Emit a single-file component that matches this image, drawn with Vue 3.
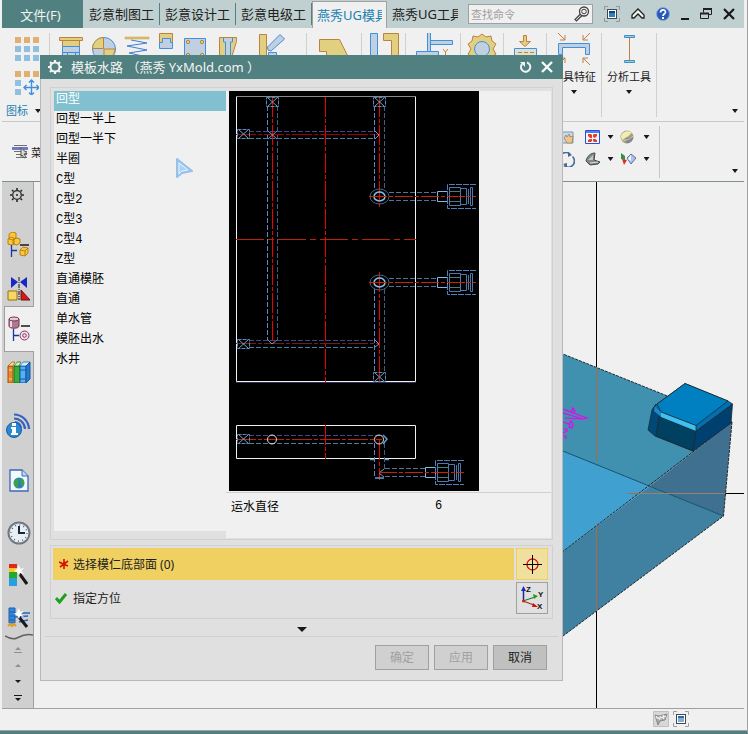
<script setup>
import { ref } from 'vue'

const tabs = ['彭意制图工', '彭意设计工', '彭意电级工', '燕秀UG模具', '燕秀UG工具']
const activeTab = ref(3)
const layouts = ['回型', '回型一半上', '回型一半下', '半圈', 'C型', 'C型2', 'C型3', 'C型4', 'Z型', '直通模胚', '直通', '单水管', '模胚出水', '水井']
const selected = ref(0)
const diameter = ref('6')
const plugs = [
  [266, 97], [373, 97], [237, 129], [237, 339], [373, 372], [237, 434]
]
</script>

<template>
  <div class="shell">
    <header class="topbar">
      <button class="file">文件(F)</button>
      <nav class="tabs">
        <button v-for="(t, i) in tabs" :key="t" class="tab" :class="{ on: i === activeTab }" @click="activeTab = i"><span>{{ t }}</span></button>
      </nav>
      <div class="search">
        <input type="text" placeholder="查找命令" aria-label="查找命令" />
        <svg width="16" height="16" viewBox="0 0 16 16" fill="none" stroke="#404040"><circle cx="10" cy="5.500" r="4.500" stroke-width="1.300" /><circle cx="10" cy="5.500" r="2.300" /><path d="M6.500 8 1 13.500l1.500 1.500L8 9.500" stroke-width="1.200" /></svg>
      </div>
      <div class="wincontrols">
        <button aria-label="全屏"><svg width="16" height="16" viewBox="0 0 16 16"><path d="M.5 4V.5H4M12 .5h3.500V4M.5 12v3.500H4M12 15.500h3.500V12" fill="none" stroke="#909898" /><rect x="3.500" y="3.500" width="9" height="9" fill="#fff" stroke="#404850" /><path d="M5 5h6v6H5z" fill="#3080c0" /><path d="M5 5h6v2H5z" fill="#104080" /></svg></button>
        <button aria-label="折叠"><svg width="14" height="12" viewBox="0 0 14 12"><path d="M1 7 7 1l6 6v3h-2L7 6l-4 4H1z" fill="#f4f4f4" stroke="#202020" stroke-width="1.300" /></svg></button>
        <button aria-label="帮助"><svg width="14" height="14" viewBox="0 0 14 14"><circle cx="7" cy="7" r="6.500" fill="#2858b8" stroke="#88a8d8" /><path d="M4.500 5.500C4.500 2 9.500 2 9.500 5c0 2-2.500 2-2.500 4" fill="none" stroke="#fff" stroke-width="1.700" /><path d="M6 10h2v2H6z" fill="#fff" /></svg></button>
        <button aria-label="最小化"><svg width="8" height="12" viewBox="0 0 8 12"><path d="M0 10h8v2H0z" fill="#181818" /></svg></button>
        <button aria-label="还原"><svg width="12" height="12" viewBox="0 0 12 12" fill="none" stroke="#202020"><path d="M3.500 4.500v-4h8v6h-3" /><path d="M3 1h9M0 5.500h9" stroke-width="2" /><path d="M.5 5.500h8v5h-8z" /></svg></button>
        <button aria-label="关闭"><svg width="12" height="12" viewBox="0 0 12 12"><path d="m1 1 10 10M11 1 1 11" stroke="#181818" stroke-width="2.200" /></svg></button>
      </div>
    </header>

    <section class="ribbon">
      <div class="group first">
        <svg width="24" height="24" viewBox="0 0 24 24"><path d="M0 0h6v6H0zM9 0h6v6H9zM18 0h6v6h-6z" fill="#e0b070" /><path d="M0 9h6v6H0zM9 9h6v6H9zM18 9h6v6h-6zM0 18h6v6H0zM9 18h6v6H9zM18 18h6v6h-6z" fill="#90c0e0" /></svg>
        <svg width="24" height="24" viewBox="0 0 24 24"><path d="M0 0h6v6H0zM9 0h6v6H9zM18 0h6v6h-6z" fill="#e0b070" /><path d="M0 9h6v6H0zM0 18h6v6H0z" fill="#90c0e0" /><path d="M9 16.500h15M16.500 9v15M11.500 14 9 16.500l2.500 2.500M21.500 14l2.500 2.500-2.500 2.500M14 11.500 16.500 9l2.500 2.500M14 21.500l2.500 2.500 2.500-2.500" fill="none" stroke="#4090e0" stroke-width="1.400" /></svg>
        <button class="glabel blue">图标<i class="caret"></i></button>
      </div>
      <div class="group tools">
        <svg width="33" height="40" viewBox="58 33 33 40"><path d="M65.500 40v16h17V40z" fill="#e0d080" stroke="#c08040" /><path d="M65.500 46.500h17v12h-17z" fill="#c0d0e0" stroke="#4090e0" /><path d="M66 52.500h16M70.500 53v6M78.500 53v6" stroke="#4090e0" /><path d="M62.500 37.500h23v3h-23z" fill="#e0d080" stroke="#c08040" /></svg>
        <svg width="33" height="40" viewBox="91 33 33 40"><circle cx="107" cy="49" r="11.500" fill="#c0d0e0" stroke="#4090e0" /><path d="M106.500 48.500h-11a11 11 0 0 1 11-11zM107 49h11a11 11 0 0 1-11 11z" fill="#e0d080" stroke="#c08040" /></svg>
        <svg width="33" height="40" viewBox="124 33 33 40"><path d="M128 37h24v2h-24z" fill="#e0c060" stroke="#c0a050" stroke-width=".5" /><path d="m134 40 16 3-20 3 20 4-18 3 18 4" fill="none" stroke="#4080d0" /></svg>
        <svg width="25" height="40" viewBox="157 33 25 40"><path d="M162.500 33.500h13v11h-13z" fill="#e0d080" stroke="#c08040" /><path d="M165.500 38.500h8v4h2v6h-13v-6h3z" fill="#c0d0e0" stroke="#4090e0" /></svg>
        <svg width="33" height="40" viewBox="182 33 33 40"><path d="M187.500 38.500h21v20h-21z" fill="#c0d0e0" stroke="#4090e0" /><g fill="#e0d080" stroke="#c08040"><circle cx="191" cy="42" r="1.700" /><circle cx="205" cy="42" r="1.700" /><circle cx="191" cy="55" r="1.700" /><circle cx="205" cy="55" r="1.700" /></g></svg>
        <svg width="33" height="40" viewBox="215 33 33 40"><path d="M222.500 37.500h17v4l-5 16h-12z" fill="#e0d080" stroke="#c08040" /><path d="M226.500 38v4h2v14h5V42h2v-4" fill="#c0d0e0" stroke="#4090e0" /></svg>
        <svg width="56" height="40" viewBox="248 33 56 40"><path d="M262.500 34.500h7v22h-7z" fill="#e0d080" stroke="#c08040" /><path d="m283 34.500 4.500 4.500L274 51l-3-1-.5-3zM271.500 52.500h8v6h-8z" fill="#c0d0e0" stroke="#4090e0" /></svg>
      </div>
      <div class="group g54"><svg width="40" height="40" viewBox="314 33 40 40"><path d="M319.500 39.500h20l9 18h-22v-6h-7z" fill="#e0d080" stroke="#c08040" /></svg></div>
      <div class="group g44"><svg width="40" height="40" viewBox="364 33 40 40"><path d="M370.500 33.500h7v24h-7z" fill="#c0d0e0" stroke="#4090e0" /><path d="M383.500 33.500h15v24h-7v-17h-8z" fill="#e0d080" stroke="#c08040" /></svg></div>
      <div class="group g54"><svg width="40" height="40" viewBox="413 33 40 40"><path d="M427.500 30.500h3v21h-3zM430.500 40.500h22v4h-22zM416.500 51.500h22v6h-22z" fill="#c0d0e0" stroke="#4090e0" /><path d="m443 49 2.500 3 2.500-3m-2.500 3v3" fill="none" stroke="#c08040" /></svg></div>
      <div class="group g43"><svg width="40" height="40" viewBox="462 33 40 40"><path d="m482 34 4 3 5-1 1 5 4 3-3 5 3 5-4 3-1 5-5-1-4 3-4-3-5 1-1-5-4-3 3-5-3-5 4-3 1-5 5 1z" fill="#e0d080" stroke="#c08040" /><circle cx="482" cy="49" r="7.500" fill="#c0d0e0" stroke="#4090e0" /></svg></div>
      <div class="group g43"><svg width="40" height="40" viewBox="504 33 40 40"><path d="M522.500 35.500h3v6h4l-5.500 5-5.500-5h4z" fill="#e0d080" stroke="#c08040" /><path d="M513.500 48.500h22v10h-22z" fill="#e0e0d0" stroke="#4090e0" /><path d="M517 52.500h16" stroke="#c08040" stroke-dasharray="4 2" /></svg></div>
      <div class="group g54 stack">
        <svg width="40" height="40" viewBox="554 33 40 40"><path d="M558.500 43.500h31v11h-4v-7h-23v7h-4z" fill="#c0d0e0" stroke="#4090e0" /><path d="m558 33 7 7m0-5v5h-5M590 33l-7 7m0-5v5h5M590 65l-7-7m5 0h-5v5M558 65l7-7m-5 0h5v5" fill="none" stroke="#c08040" /></svg>
        <button class="glabel">模具特征</button><i class="caret"></i>
      </div>
      <div class="group g54 stack">
        <svg width="40" height="40" viewBox="608 33 40 40"><path d="M628.500 37v24" stroke="#c08040" /><path d="M623.500 35.500h10v2h-10zM623.500 60.500h10v2h-10z" fill="#a0c8e0" stroke="#4090c0" /></svg>
        <button class="glabel">分析工具</button><i class="caret"></i>
      </div>
      <i class="caret corner"></i>
    </section>

    <section class="toolbar">
      <button class="menu">
        <svg width="18" height="15" viewBox="0 0 18 15"><path d="M2 1.500h13M2 7.500h13M4 10.500h11M4 13.500h11" stroke="#707070" /><path d="M0 3h16v3H0z" fill="#7078c8" /><path d="m9 3.500 6 6-3 .5 2 3-2 1-2-3-1 1.500z" fill="#d8d8d8" stroke="#505050" /></svg>
        菜
      </button>
      <div class="views">
        <svg width="16" height="15" viewBox="0 0 16 15"><path d="M1 2h13v11H1z" fill="#c8d8f0" stroke="#8098b0" /><path d="m5 8 2-3 1 2 2-3 1 3 3-1-1 7H8z" fill="#e8c890" stroke="#987850" stroke-width=".7" /></svg>
        <svg width="15" height="14" viewBox="0 0 15 14"><path d="M.5.5h14v13H.5z" fill="#f0f4ff" stroke="#2850d0" /><path d="M1 1h13v2H1z" fill="#5080e8" /><path d="M3 4h3l1 1v3H5L3 6zM12 4H9L8 5v2l2 1 2-2zM3 12h3l1-1V9H5l-2 1zM12 12H9l-1-1V9h2l2 1z" fill="#e04028" /></svg>
        <i class="caret"></i>
        <svg width="14" height="14" viewBox="0 0 14 14"><circle cx="7" cy="7" r="6.500" fill="#a8a070" /><path d="M1 7C1 2 8-1 12 3c-3 1-2 3-5 4S3 10 2 10z" fill="#f0ecb8" /><path d="M6 8c3 0 5-1 7-2 1 4-3 8-7 7z" fill="#8088a0" /><path d="M2 10c4 1 8-1 11-4" fill="none" stroke="#d8d0a0" /></svg>
        <i class="caret"></i>
        <svg width="16" height="15" viewBox="0 0 16 15"><path d="M3 11a6 6 0 0 1 8-9M13.500 4.500a6 6 0 0 1-8.500 9" fill="none" stroke="#486898" stroke-width="1.600" /><path d="M9 0v5l4-2zM8 15v-4l-4 1z" fill="#486898" /></svg>
        <svg width="16" height="14" viewBox="0 0 16 14"><path d="M1 9C2 4 6 1 10 1L9 8l6 2-2 2-8 1z" fill="#808888" stroke="#404848" /><path d="m3 8 5-5v5z" fill="#c0c8c8" /><path d="m5 11 8-1" stroke="#e0e0e0" /></svg>
        <i class="caret"></i>
        <svg width="16" height="14" viewBox="0 0 16 14"><path d="m1 1 4 3v4L1 7z" fill="#30904a" /><path d="m2 7 5 1-3 5z" fill="#d83020" /><path d="m11 2 5 4-5 6-4-6z" fill="#b0c0e8" stroke="#6070a8" /><path d="m11 3-3 4 3 2z" fill="#fff" /></svg>
        <i class="caret"></i>
      </div>
      <i class="caret corner"></i>
    </section>

    <main class="main">
      <aside class="rail">
        <button class="s1" aria-label="设置"><svg width="14" height="14" viewBox="0 0 14 14"><circle cx="7" cy="7" r="4.300" fill="none" stroke="#282828" stroke-width="1.300" /><circle cx="7" cy="7" r="1" fill="#282828" /><path d="M7 0v2M7 12v2M0 7h2M12 7h2M2 2l1.500 1.500M12 2l-1.500 1.500M2 12l1.500-1.500M12 12l-1.500-1.500" stroke="#282828" stroke-width="1.600" /></svg></button>
        <button class="s2" aria-label="装配导航器"><svg width="24" height="26" viewBox="0 0 24 26"><g fill="#f8c840" stroke="#b87808" stroke-width=".9"><path d="m2 2 3-2 4 1v5l-3 2-4-1zM1 7l3-2 3 1v6l-3 1-3-1zM6 8l3-2 4 1v4l-3 2-4-1z" /><path d="m13 18 3-3 5 1v5l-3 3-5-1z" /><path d="m13 18 5 1 3-3M18 19v5" fill="none" /></g><path d="M13 13h9" stroke="#181818" stroke-width="1.500" /><path d="M4.500 13v12M5 18.500h5" stroke="#1838a0" stroke-width="1.300" /></svg></button>
        <button class="s3" aria-label="约束导航器"><svg width="24" height="24" viewBox="0 0 24 24"><path d="m4 0 7 5-7 6zM20 0l-7 5 7 6z" fill="#1828c8" /><path d="M12 0v23" stroke="#181818" stroke-dasharray="4 1 1 1" /><path d="M1 14h9v9H1z" fill="#f8d860" stroke="#907010" /><path d="M14 13v10h9z" fill="#d81818" stroke="#701010" /></svg></button>
        <button class="s4" aria-label="部件导航器"><svg width="24" height="26" viewBox="0 0 24 26"><path d="M1 3v7c0 3 10 3 10 0V3z" fill="#b07890" stroke="#703850" /><ellipse cx="6" cy="3" rx="5" ry="2" fill="#e8c8d8" stroke="#703850" /><path d="M3 5v6" stroke="#f0d8e0" stroke-width="2" /><path d="M13 10h9" stroke="#181818" stroke-width="1.500" /><path d="M5.500 13v12M6 19.500h5" stroke="#1838a0" stroke-width="1.300" /><circle cx="16.500" cy="19.500" r="4.500" fill="#f0e0e8" stroke="#803860" /><circle cx="16.500" cy="19.500" r="1.800" fill="none" stroke="#803860" /></svg></button>
        <button class="s5" aria-label="重用库"><svg width="24" height="22" viewBox="0 0 24 22"><path d="m1 5 4-4h18v17l-4 4H1z" fill="#f8f0d8" /><path d="M1 5h5v17H1z" fill="#e88828" stroke="#a85008" /><path d="m1 5 4-4h3L6 5z" fill="#f8d8a0" stroke="#a85008" stroke-width=".7" /><path d="M7 5h6v17H7z" fill="#38b038" stroke="#107018" /><path d="m7 5 3-4h4l-2 4z" fill="#d0f0c0" stroke="#107018" stroke-width=".7" /><path d="M13 5h6v17h-6z" fill="#58b0f0" stroke="#1058a8" /><path d="m13 5 3-4h7l-4 4z" fill="#d8ecfc" stroke="#1058a8" stroke-width=".7" /><path d="m19 5 4-4v17l-4 4z" fill="#2878c8" stroke="#1058a8" /><path d="M13 9h6M13 18h6" stroke="#1058a8" /><path d="M2 9h3M2 18h3" stroke="#f8d8a0" /></svg></button>
        <button class="s6" aria-label="信息"><svg width="25" height="25" viewBox="0 0 25 25"><g fill="none" stroke="#3860c0" stroke-width="2.200"><path d="M8 1.500A15 15 0 0 1 23 16" /><path d="M8 5.500A11 11 0 0 1 19 16" /><path d="M9 9A7 7 0 0 1 15 15" /></g><circle cx="8" cy="17" r="7.500" fill="#2888d0" stroke="#1860a0" /><path d="M6 10h4v3H6zM5 14h5v6h2v2H5v-2h1v-4H5z" fill="#fff" /></svg></button>
        <button class="s7" aria-label="浏览器"><svg width="20" height="23" viewBox="0 0 20 23"><path d="M1 1h12l6 6v15H1z" fill="#f4f8ff" stroke="#3868b8" stroke-width="1.300" /><path d="M13 1v6h6" fill="#c8d8f0" stroke="#3868b8" /><circle cx="10" cy="14" r="5.500" fill="#3080c0" /><path d="M6 11c3-3 4 0 3 3s2 3-1 5c-3-2-4-5-2-8zM12 9c4 1 4 7 1 8 0-3-2-3-1-8z" fill="#38a838" /></svg></button>
        <button class="s8" aria-label="历史记录"><svg width="24" height="24" viewBox="0 0 24 24"><circle cx="12" cy="12" r="10.500" fill="#e8eef4" stroke="#707880" stroke-width="2" /><circle cx="12" cy="12" r="8" fill="none" stroke="#506880" stroke-dasharray="1 3.190" stroke-width="1.500" /><path d="M12 5v7h6" fill="none" stroke="#182838" stroke-width="2" /></svg></button>
        <button class="s9" aria-label="系统材料"><svg width="22" height="24" viewBox="0 0 22 24"><path d="M1 1h8v4H1z" fill="#e02818" /><path d="M1 5h8v4H1z" fill="#f8c828" /><path d="M1 9h8v6H1z" fill="#28a828" /><path d="M1 15h8v8H1z" fill="#28a0e0" /><path d="m11 10 8 11" stroke="#181818" stroke-width="3" /><path d="m11 2 1 4 4-1-3 3 3 3-4-1-1 3-2-4-3-1 3-2z" fill="#fff" /></svg></button>
        <button class="s10" aria-label="加工向导"><svg width="24" height="24" viewBox="0 0 24 24"><path d="M2 2h6v15H2z" fill="#3888d8" stroke="#1860b0" /><path d="M3 6h4M3 10h4M3 14h4M8 7h15M8 11l13-1M12 16l9-2" stroke="#2068c0" stroke-width="1.500" /><path d="m1 20 2-2 2 2 2-2 2 2" fill="none" stroke="#e0a020" stroke-width="2" /><path d="m12 11 8 10" stroke="#181818" stroke-width="3" /><path d="m12 2 1 4 4-1-3 3 3 3-4-1-1 3-2-4-3-1 3-2z" fill="#fff" /></svg></button>
        <svg class="wave" width="28" height="8" viewBox="0 0 28 8"><path d="M0 3c5 3 8 4 12 2s8-5 16-3" fill="none" stroke="#606060" stroke-width="1.500" /></svg>
        <div class="scrollers">
          <svg width="8" height="6" viewBox="0 0 8 6"><path d="m4 0 3 3H1zM0 5h8v1H0z" fill="#909090" /></svg>
          <svg width="8" height="6" viewBox="0 0 8 6"><path d="m4 1 3 3H1z" fill="#909090" /></svg>
          <svg width="8" height="6" viewBox="0 0 8 6"><path d="M1 1h6L4 4z" fill="#181818" /></svg>
          <svg width="8" height="6" viewBox="0 0 8 6"><path d="M0 0h8v1H0zM1 3h6L4 6z" fill="#181818" /></svg>
        </div>
      </aside>
      <div class="canvas">
        <svg viewBox="34 182 710 526" preserveAspectRatio="xMaxYMin meet">
          <path d="M596.500 182v526M725 493.500h19" stroke="#000" />
          <path d="M553 350 732 422 650 486 553 447z" fill="#4090b0" />
          <path d="M553 447 650 486 553 559z" fill="#40a0d0" />
          <path d="M732 422 723.500 516 650 486z" fill="#407090" />
          <path d="M650 486 723.500 516 553 643.500V559z" fill="#4080a0" />
          <path d="M553 447 723.500 516" stroke="#10506c" />
          <path d="M553 350 732 422 553 559M732 422l-8.500 94L553 643.500" fill="none" stroke="#202830" stroke-dasharray="3 1" />
          <path d="M596.500 367v94M596.500 525v86" stroke="#b06840" />
          <path d="M628 493.500h97" stroke="#a08068" />
          <path d="M628 493.500h12" stroke="#b06840" />
          <path d="m563 409 8 3 2-4 2 3-2 2-2-1 10 4 6 2-4 1-20-6m20 6-18-1m-2 4 6 2 2-3 2 3-1 4-3-1 1-3m-7 5h4v2l-4 2m0 3h3v3" fill="none" stroke="#f000f0" stroke-width="1.200" />
          <g stroke="#202830" stroke-width=".8" stroke-linejoin="round">
            <path d="M656 404 652 410 648 430 655 436 693 451 660 411z" fill="#004878" />
            <path d="M659 416 696 431 693 451 656 436z" fill="#004060" />
            <path d="M696 431 732.500 404 731 423 693 451z" fill="#004070" />
            <path d="M685 383.500 728 401 732.500 404 696 431 661 417 653 408 657 404z" fill="#0070b0" />
            <path d="M661 412 696 425.500V431L661 417z" fill="#40c0f0" stroke="none" />
            <path d="M685 383.500 728 401 696 425.500 661 412 657 404z" fill="#0080c0" />
            <path d="M655 407 661 412v5l-7-6z" fill="#2088c0" stroke="none" />
            <path d="M696 425v6" />
          </g>
        </svg>
      </div>
    </main>

    <footer class="status">
      <button aria-label="完成草图"><svg width="16" height="16" viewBox="0 0 16 16"><path d="M.5.5h15v15H.5z" fill="#d8d8d8" stroke="#c0c0c0" /><path d="m2 4 4 1 8-2-2 6-5 1-2 4z" fill="#a8a8a8" stroke="#888" /><path d="m3 5 1 2h2l1 2M7 5l1 2 2-1 1 2M10 4l1 2 2-1" stroke="#f0f0f0" fill="none" stroke-width="1.300" /></svg></button>
      <button aria-label="全屏显示"><svg width="16" height="16" viewBox="0 0 16 16"><path d="M.5 4V.5H4M12 .5h3.500V4M.5 12v3.500H4M12 15.500h3.500V12" fill="none" stroke="#a0a0a0" /><rect x="3.500" y="3.500" width="9" height="9" fill="#fff" stroke="#404850" /><path d="M5 5h6v6H5z" fill="#80b0d0" /><path d="M5 5h6v2H5z" fill="#3068a8" /></svg></button>
    </footer>

    <section class="dialog" role="dialog" aria-label="模板水路">
      <header class="dhead">
        <svg width="16" height="16" viewBox="0 0 16 16"><circle cx="8" cy="8" r="4.500" fill="none" stroke="#f4f4f4" stroke-width="2" /><path d="M8 1v2.500M8 12.500V15M1 8h2.500M12.500 8H15M3 3l2 2M13 3l-2 2M3 13l2-2M13 13l-2-2" stroke="#f4f4f4" stroke-width="2.200" /></svg>
        <h1>模板水路 （燕秀 YxMold.com ）</h1>
        <button aria-label="重置"><svg width="14" height="14" viewBox="0 0 14 14"><path d="M8 2.500a4.700 4.700 0 1 1-5 1.500" fill="none" stroke="#f4f4f4" stroke-width="2" /><path d="M1 2h5v5z" fill="#f4f4f4" /></svg></button>
        <button aria-label="关闭"><svg width="12" height="12" viewBox="0 0 12 12"><path d="m1 1 10 10M11 1 1 11" stroke="#f8f8f8" stroke-width="2.400" /></svg></button>
      </header>
      <div class="dbody">
        <div class="picker">
          <ul class="list">
            <li v-for="(l, i) in layouts" :key="l"><button :class="{ sel: i === selected }" @click="selected = i">{{ l }}</button></li>
          </ul>
          <div class="preview">
            <svg width="250" height="400" viewBox="229 91 250 400" fill="none">
              <path d="M229 91h250v400H229z" fill="#000" />
              <path d="M236.500 96.500v285h179v-285M236.500 425.500h179v33h-179z" stroke="#f0f0f0" />
              <path d="M236 96.500h180" stroke="#888" />
              <path d="M236 382.500h180" stroke="#303058" />
              <g stroke="#6088c8" stroke-dasharray="5 2">
                <path d="M267.500 106v234M374.500 106v84M374.500 289v82M374.500 443v35" />
                <path d="M277.500 106v234M384.500 106v84M384.500 289v82M384.500 443v26" stroke="#406080" />
                <path d="M249 131.500h126M249 340.500h126M249 435.500h132" stroke="#404888" />
                <path d="M249 138.500h126M249 347.500h126M249 443.500h126" stroke="#4880a0" />
              </g>
              <g stroke="#f00000" stroke-dasharray="20 2 4 2">
                <path d="M272.500 97v247M325.500 97v285M379.500 97v110M379.500 272v110M325.500 425v34M379.500 440v40" />
                <path d="M236 239.500h180" stroke="#c02000" stroke-dasharray="28 4 6 4" />
                <path d="M236 134.500h143" stroke="#a00000" />
                <path d="M236 343.500h143" stroke="#702010" />
                <path d="M236 439.500h146" stroke="#c02000" />
              </g>
              <path d="m268 131 9 8m0-8-9 8M375 131l4 4-4 4M375 340l4 4-4 3M268 340l4 4 5-4M384 469l-5 4 5 4" stroke="#7898c0" />
              <g v-for="p in plugs" :key="p.join()" :transform="`translate(${p[0]} ${p[1]})`">
                <path d="M.5.500h12v9H.5z" stroke="#5888b8" stroke-dasharray="4 1" /><path d="m2 1 9 8m0-8-9 8" stroke="#70a0c0" />
              </g>
              <g v-for="y in [0, 86]" :key="y" :transform="`translate(0 ${y})`">
                <ellipse cx="379.500" cy="196.500" rx="9.500" ry="7.500" stroke="#406880" />
                <ellipse cx="379.500" cy="196.500" rx="5.500" ry="4.500" stroke="#80c0e8" stroke-width="1.500" />
              </g>
              <g v-for="f in [[0, 0], [0, 86], [-12, 276]]" :key="f.join()" :transform="`translate(${f[0]} ${f[1]})`">
                <path :d="f[0] ? 'M397 192.500h40M397 200.500h40' : 'M389 192.500h48M389 200.500h48'" stroke="#4878a0" stroke-dasharray="5 2" />
                <path d="M437.500 191.500h10v10h-10z" stroke="#80b8e8" />
                <path d="M476 184.500h-28.500v24H476" stroke="#5080b8" stroke-dasharray="6 1" />
                <path d="M449.500 187.500h11v18h-11zM460.500 188.500h6v16h-6zM468.500 189v15M470.500 187.500h2v18h-2z" stroke="#5078b0" />
                <path d="M450 191.500h10M450 201.500h10" stroke="#408080" />
                <path :d="f[0] ? 'M391 196.500h85' : 'M369 196.500h107'" stroke="#d02000" stroke-dasharray="18 2 4 2" />
              </g>
              <circle cx="272" cy="439.500" r="4.500" stroke="#f0e0d8" />
              <circle cx="379" cy="439.500" r="4.500" stroke="#f0e0d8" />
              <path d="m383 435 4 4-4 5M370 459.500h5M385 459.500h4M375 478h9" stroke="#60a0d0" stroke-width="1.500" />
            </svg>
            <div class="param"><label for="dia">运水直径</label><input id="dia" v-model="diameter" type="text" /></div>
          </div>
        </div>
        <div class="steps">
          <div class="step active">
            <p><svg width="10" height="10" viewBox="0 0 10 10"><path d="M5 0v10M0 3l9 4M9 2 1 8" stroke="#d81000" stroke-width="1.600" /></svg>选择模仁底部面 (0)</p>
            <button aria-label="选择面"><svg width="20" height="20" viewBox="0 0 20 20" fill="none"><circle cx="10.500" cy="10.500" r="5.500" stroke="#d81010" stroke-width="1.300" /><path d="M10.500 1v19M1 10.500h19" stroke="#000" /></svg></button>
          </div>
          <div class="step">
            <p><svg width="12" height="12" viewBox="0 0 12 12"><path d="m1 6 3.500 4L11 2" fill="none" stroke="#20a020" stroke-width="3" /></svg>指定方位</p>
            <button aria-label="指定方位"><svg width="24" height="26" viewBox="0 0 24 26"><path d="M3.500 16V4" stroke="#1828a0" stroke-width="1.500" /><path d="M1 6 3.500 1 6 6z" fill="#1828c0" /><path d="m3 16 12-4" stroke="#208020" stroke-width="1.300" /><path d="m13 9 5 2-4 3z" fill="#20a020" /><path d="m3 16 11 4" stroke="#a03028" stroke-width="1.300" /><path d="m13 18 5 4h-6z" fill="#d01010" /><circle cx="3.500" cy="16" r="1.500" fill="#d02010" /><g fill="#101010" font-family="Liberation Sans" font-size="8" font-weight="bold"><text x="6" y="7">Z</text><text x="18" y="12">Y</text><text x="17" y="24">X</text></g></svg></button>
          </div>
        </div>
        <button class="expander" aria-label="展开"><svg width="10" height="5" viewBox="0 0 10 5"><path d="M0 0h10L5 5z" fill="#181818" /></svg></button>
        <div class="actions">
          <button disabled>确定</button><button disabled>应用</button><button>取消</button>
        </div>
      </div>
      <svg class="pointer" width="18" height="24" viewBox="0 0 18 24"><path d="M2 2v18l5-4 10-2z" fill="#a8d0f0" stroke="#98c0e8" stroke-width="2" stroke-linejoin="round" /><path d="M4 6v11l3-3 6-1z" fill="#a8d4f4" stroke="#e8f4ff" stroke-linejoin="round" /></svg>
    </section>
  </div>
</template>

<style>
body { margin: 0; background: #f0f0f0; }
</style>

<style scoped>
.shell, .shell * { box-sizing: border-box; }
.shell {
  position: relative;
  display: flex;
  flex-direction: column;
  min-height: 100vh;
  padding: 0 3px 0 2px;
  background: #f0f0f0;
  border-right: 1px solid #a0a0a0;
  border-bottom: 3px solid #508080;
  color: #202020;
  font-family: "Noto Sans", "Noto Sans CJK SC", sans-serif;
  font-size: 12px;
}
svg { display: block; flex: none; }
button {
  font: inherit;
  color: inherit;
  background: none;
  border: 0;
  padding: 0;
  margin: 0;
}
input { font: inherit; color: inherit; border: 0; padding: 0; background: none; min-width: 0; }
.caret {
  display: block;
  width: 6px;
  height: 4px;
  background: #181818;
  clip-path: polygon(0 0, 100% 0, 50% 100%);
}

.topbar { display: flex; align-items: center; height: 28px; background: #c0d0d0; font-size: 13px; }
.file { flex: none; width: 81px; height: 28px; background: #508080; color: #f0f4f4; padding-right: 4px; white-space: nowrap; }
.tabs { display: flex; flex: none; align-self: stretch; align-items: center; padding-left: 1px; }
.tab { width: 76px; height: 22px; padding: 0 5px; border-right: 1px solid #508080; text-align: left; }
.tab span { display: block; overflow: hidden; white-space: nowrap; line-height: 22px; }
.tab.on { width: 75px; height: 27px; margin-top: 1px; background: #f0f0f0; color: #2080b0; border: 1px solid #a0a0a0; border-bottom: 0; padding: 0 4px; }
.tab:last-child { border: 0; }
.search {
  display: flex;
  align-items: center;
  flex: 1;
  min-width: 0;
  height: 20px;
  margin-left: 5px;
  padding: 0 2px;
  border: 1px solid #a0a0a0;
  background: #f0f0f0;
  font-size: 11px;
}
.search input { flex: 1; width: 0; }
.search input::placeholder { color: #a0a0a0; }
.wincontrols { display: flex; flex: none; align-items: center; gap: 11px; padding: 0 9px 0 11px; }

.ribbon { position: relative; display: flex; height: 94px; padding: 5px 0 4px; border-bottom: 1px solid #c8c8c8; font-size: 11px; }
.group { display: flex; justify-content: center; align-items: flex-start; border-right: 1px solid #d0d0d0; }
.first { flex-direction: column; justify-content: flex-start; align-items: flex-start; gap: 10px; width: 48px; padding: 4px 0 0 4px; }
.first svg { margin-left: 9px; }
.first .glabel { display: flex; align-items: center; gap: 7px; margin-top: -2px; }
.glabel { line-height: 16px; white-space: nowrap; }
.blue { color: #2080b0; }
.tools { width: 257px; }
.g54 { width: 55px; }
.g44 { width: 44px; }
.g43 { width: 43px; }
.stack { flex-direction: column; justify-content: flex-start; align-items: center; }
.stack .glabel { margin-top: -4px; }
.stack .caret { margin-top: 5px; }
.corner { position: absolute; right: 6px; bottom: 8px; }

.toolbar { position: relative; display: flex; height: 60px; border-bottom: 1px solid #809090; font-size: 11px; }
.menu { display: flex; align-items: center; gap: 1px; width: 557px; padding-left: 10px; }
.views {
  display: grid;
  grid-template-columns: 26px 16px 19px 17px 19px;
  grid-template-rows: 22px 22px;
  align-items: center;
  align-content: start;
  width: 101px;
  height: 52px;
  margin-top: 4px;
  border-right: 1px solid #c8c8c8;
}
.views .caret { justify-self: center; }

.main { display: flex; flex: 1; border-bottom: 1px solid #a0a0a0; }
.rail { display: flex; flex-direction: column; align-items: flex-end; width: 32px; background: #d0d0d0; border-right: 1px solid #a0a0a0; }
.rail button { display: flex; align-items: center; justify-content: center; width: 29px; height: 44px; }
.rail .s1 { height: 26px; padding-right: 4px; }
.rail .s2 { height: 54px; margin-top: 10px; }
.rail .s3 { height: 34px; }
.rail .s4 { width: 30px; height: 46px; margin-right: -1px; background: #f0f0f0; border: 1px solid #a0a0a0; border-right: 0; }
.rail .s5 { height: 40px; }
.rail .s6 { height: 66px; }
.rail .s7 { height: 44px; }
.rail .s8 { height: 62px; }
.rail .s9 { height: 22px; }
.rail .s10 { height: 64px; }
.wave { margin-top: -17px; }
.scrollers { display: flex; flex-direction: column; align-self: center; gap: 10px; padding-top: 6px; }
.canvas { position: relative; flex: 1; min-height: 526px; }
.canvas svg { position: absolute; inset: 0; width: 100%; height: 100%; }

.status { display: flex; align-items: center; justify-content: flex-end; gap: 4px; height: 22px; padding-right: 58px; margin: 0 -3px 0 -2px; padding-bottom: 2px; border-bottom: 1px solid #a0a0a0; }

.dialog {
  position: absolute;
  left: 40px;
  top: 55px;
  width: 523px;
  background: #e0e0e0;
  border: 1px solid #b8b8b8;
  border-top: 0;
}
.dhead { display: flex; align-items: center; height: 24px; margin: 0 -1px; padding: 0 10px 0 7px; background: #508080; color: #f4f4f4; gap: 8px; }
.dhead h1 { flex: 1; margin: 0; font-size: 13px; line-height: 24px; font-weight: 400; }
.dbody { padding: 8px 9px; }
.picker { display: flex; height: 453px; padding: 3px 1px 1px 3px; border: 1px solid #d0d0d0; }
.list { flex: 1; margin: 0 0 7px; padding: 0; list-style: none; background: #f0f0f0; font-family: "Liberation Mono", "Noto Sans CJK SC", monospace; }
.list button { display: block; width: 100%; height: 20px; padding: 0 0 2px 2px; line-height: 18px; text-align: left; color: #000; }
.list .sel { background: #80c0d0; color: #fff; }
.preview { width: 325px; background: #f0f0f0; }
.preview > svg { margin-left: 3px; }
.param { display: flex; align-items: center; height: 27px; margin-top: 1px; padding-left: 5px; border-top: 1px solid #d0d0d0; color: #000; }
.param label { width: 204px; }
.param input { width: 60px; font-family: "Liberation Mono", monospace; }
.steps { display: grid; gap: 2px; margin-top: 5px; padding: 2px 4px 4px 2px; border: 1px solid #d0d0d0; }
.step { display: flex; gap: 2px; height: 32px; }
.step p { display: flex; flex: 1; align-items: center; gap: 6px; margin: 0; padding-left: 2px; }
.step.active p { background: #f0d060; padding-left: 6px; gap: 4px; }
.step button { display: flex; align-items: center; justify-content: center; width: 32px; height: 32px; border: 1px solid #a0a0a0; }
.step.active button { background: #f0e0a0; border-color: #f0d060; }
.expander { display: flex; align-items: center; justify-content: center; width: 100%; height: 17px; padding-top: 3px; }
.actions { display: flex; justify-content: flex-end; gap: 5px; margin: 0 -5px; padding: 8px 11px 2px 0; border-top: 1px solid #d0d0d0; }
.actions button { width: 54px; height: 25px; line-height: 21px; border: 1px solid #a0a0a0; background: #c0c0c0; }
.actions button:disabled { background: #d0d0d0; color: #a0a0a0; }
.pointer { position: absolute; left: 134px; top: 102px; }
</style>
